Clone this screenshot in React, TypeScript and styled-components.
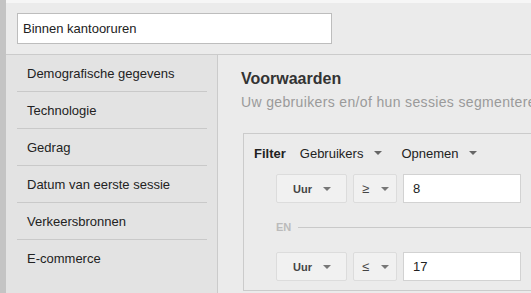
import styled, { createGlobalStyle } from 'styled-components';

const GlobalStyle = createGlobalStyle`
  html, body {
    margin: 0;
    padding: 0;
    background: #ebebeb;
    overflow: hidden;
  }
  * {
    box-sizing: border-box;
  }
`;

// layout
const Page = styled.div`
  display: flex;
  width: 531px;
  height: 293px;
  font-family: 'Liberation Sans', Arial, sans-serif;
  font-size: 13px;
  color: #222;
`;

const LeftStrip = styled.div`
  width: 6px;
  flex: none;
  background: #c4c4c4;
`;

const Panel = styled.div`
  flex: 1;
  display: flex;
  flex-direction: column;
  min-width: 0;
  border-top: 3px solid #f6f6f6;
`;

const Header = styled.div`
  height: 52px;
  padding: 10px 11px 0;
  border-bottom: 1px solid #cbcbcb;
  background: #ebebeb;
`;

const SearchInput = styled.div`
  width: 315px;
  height: 31px;
  border: 1px solid #bdbdbd;
  background: #fff;
  display: flex;
  align-items: center;
  padding-left: 5px;
  font-size: 13px;
  color: #222;
`;

const Body = styled.div`
  flex: 1;
  display: flex;
  min-height: 0;
`;

const Sidebar = styled.div`
  width: 212px;
  flex: none;
  background: #e3e3e3;
  border-right: 1px solid #cbcbcb;
  padding: 0 10px 0 11px;
`;

const SideItem = styled.div`
  height: 37px;
  display: flex;
  align-items: center;
  padding-left: 10px;
  border-bottom: 1px solid #c9c9c9;

  &:last-child {
    border-bottom: none;
  }
`;

const Main = styled.div`
  flex: 1;
  min-width: 0;
  padding: 14px 0 0 23px;
  overflow: hidden;
`;

const Title = styled.h2`
  margin: 0;
  font-size: 16px;
  line-height: 20px;
  font-weight: bold;
  color: #333;
`;

const SubTitle = styled.div`
  margin-top: 5px;
  font-size: 14px;
  line-height: 16px;
  letter-spacing: 0.35px;
  color: #9a9a9a;
  white-space: nowrap;
`;

const FilterBox = styled.div`
  margin: 23px 0 0 2px;
  width: 340px;
  height: 158px;
  border: 1px solid #cbcbcb;
  padding: 9px 0 0 10px;
`;

const FilterBar = styled.div`
  display: flex;
  align-items: center;
  height: 20px;
  margin-bottom: 11px;
`;

const FilterLabel = styled.span`
  font-weight: bold;
  color: #222;
  margin-right: 14px;
`;

const Dropdown = styled.span<{ $gap: number }>`
  display: inline-flex;
  align-items: center;
  gap: ${(p) => p.$gap}px;
  margin-right: 19px;
  color: #222;
`;

const Arrow = styled.span<{ $color?: string }>`
  display: inline-block;
  width: 0;
  height: 0;
  border-left: 4px solid transparent;
  border-right: 4px solid transparent;
  border-top: 4px solid ${(p) => p.$color || '#777'};
`;

const ConditionRow = styled.div`
  display: flex;
  gap: 6px;
  margin-left: 22px;
  height: 29px;
`;

const SelectBtn = styled.div<{ $width: number; $pad: number }>`
  width: ${(p) => p.$width}px;
  height: 29px;
  display: flex;
  align-items: center;
  justify-content: space-between;
  padding: 0 ${(p) => p.$pad - 1}px 0 ${(p) => p.$pad}px;
  background: #f1f1f1;
  border: 1px solid #dcdcdc;
  border-radius: 2px;
  font-size: 11px;
  font-weight: bold;
  color: #444;
`;

const OpSign = styled.span`
  font-weight: normal;
  font-size: 13px;
`;

const ValueInput = styled.div`
  width: 118px;
  height: 29px;
  border: 1px solid #d2d2d2;
  background: #fff;
  display: flex;
  align-items: center;
  padding-left: 9px;
  font-size: 13px;
  color: #222;
`;

const AndDivider = styled.div`
  display: flex;
  align-items: center;
  gap: 7px;
  margin: 17px 0 18px 22px;
  height: 14px;
  font-size: 11px;
  font-weight: bold;
  color: #bbb;

  &::after {
    content: '';
    flex: 1;
    height: 1px;
    background: #c9c9c9;
  }
`;

const sideItems = [
  'Demografische gegevens',
  'Technologie',
  'Gedrag',
  'Datum van eerste sessie',
  'Verkeersbronnen',
  'E-commerce',
];

const Condition = ({ op, value }: { op: string; value: string }) => (
  <ConditionRow>
    <SelectBtn $width={71} $pad={16}>
      Uur
      <Arrow />
    </SelectBtn>
    <SelectBtn $width={44} $pad={8}>
      <OpSign>{op}</OpSign>
      <Arrow />
    </SelectBtn>
    <ValueInput>{value}</ValueInput>
  </ConditionRow>
);

const App = () => {
  return (
    <>
      <GlobalStyle />
      <Page>
        <LeftStrip />
        <Panel>
          <Header>
            <SearchInput>Binnen kantooruren</SearchInput>
          </Header>
          <Body>
            <Sidebar>
              {sideItems.map((item) => (
                <SideItem key={item}>{item}</SideItem>
              ))}
            </Sidebar>
            <Main>
              <Title>Voorwaarden</Title>
              <SubTitle>Uw gebruikers en/of hun sessies segmenteren</SubTitle>
              <FilterBox>
                <FilterBar>
                  <FilterLabel>Filter</FilterLabel>
                  <Dropdown $gap={11}>
                    Gebruikers
                    <Arrow $color="#666" />
                  </Dropdown>
                  <Dropdown $gap={11}>
                    Opnemen
                    <Arrow $color="#666" />
                  </Dropdown>
                </FilterBar>
                <Condition op="≥" value="8" />
                <AndDivider>EN</AndDivider>
                <Condition op="≤" value="17" />
              </FilterBox>
            </Main>
          </Body>
        </Panel>
      </Page>
    </>
  );
};

export default App;
